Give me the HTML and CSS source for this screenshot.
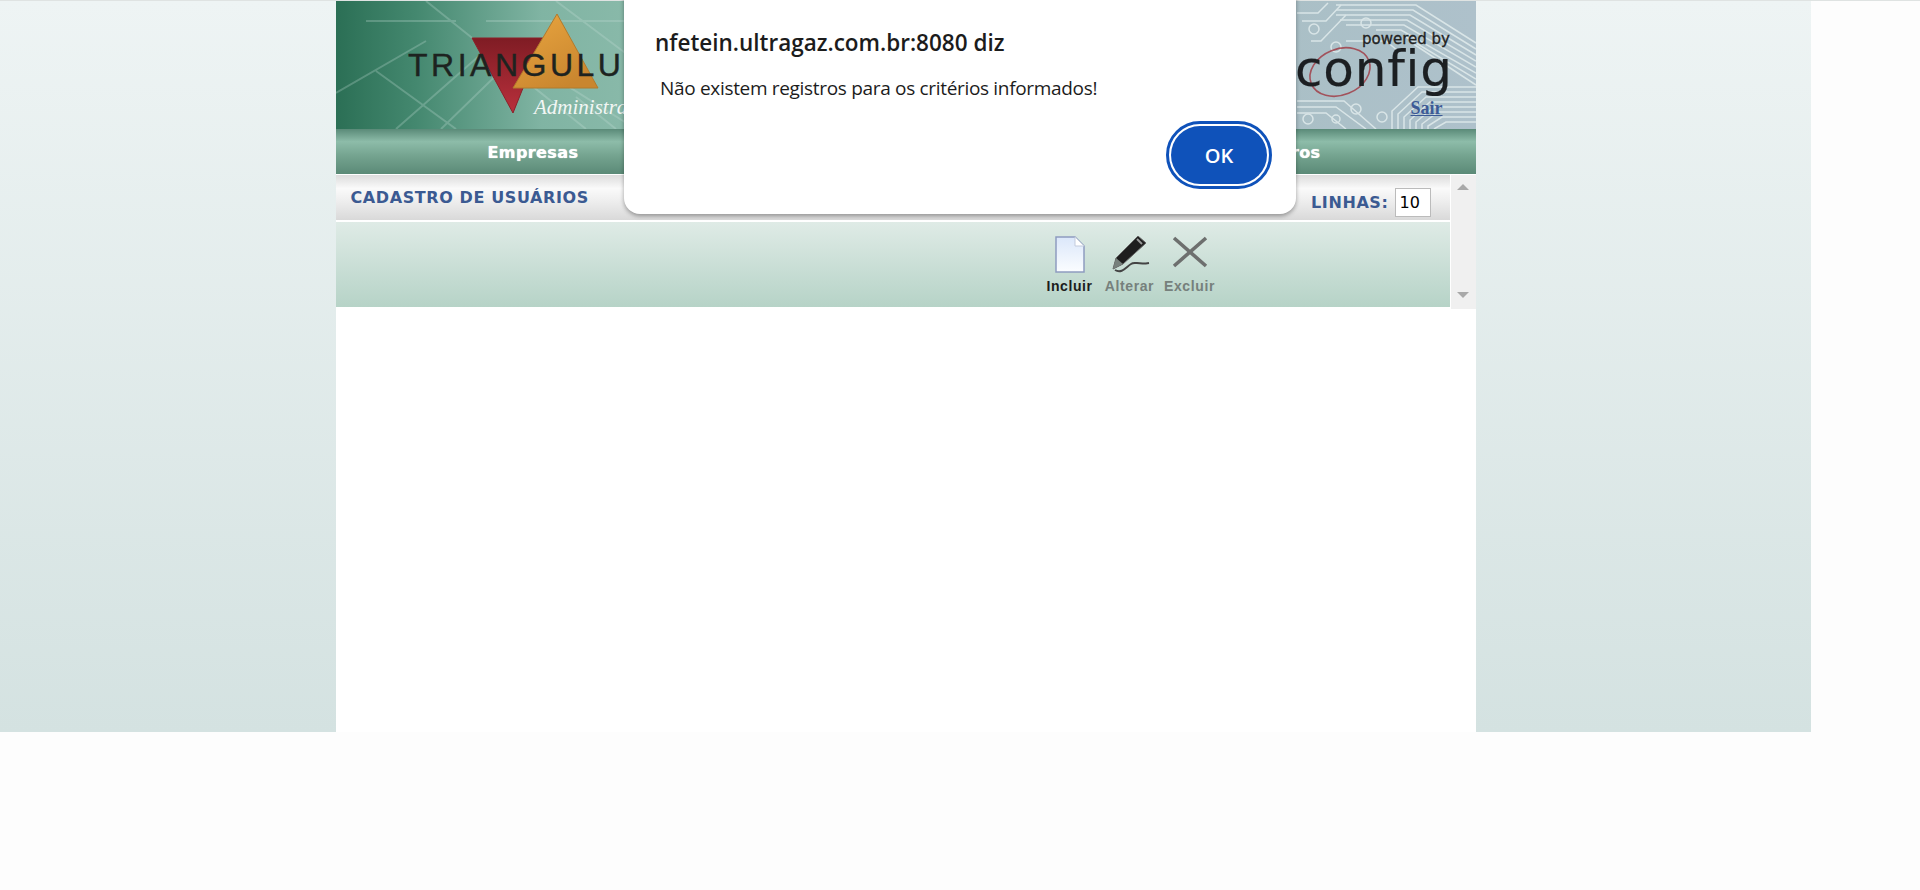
FILE: index.html
```html
<!doctype html>
<html lang="pt-BR">
  <head>
    <meta charset="utf-8">
    <title>Cadastro de Usuários</title>
    <link rel="stylesheet" href="styles.css">
  </head>
  <body>
    <div class="page">
      <div class="side"></div>
      <div class="center">
        <svg class="banner" width="1140" height="128" viewBox="0 0 1140 128">
          <defs>
            <linearGradient id="bannerGreen" x1="0" y1="0" x2="1" y2="0">
              <stop offset="0" stop-color="#2b6f55"/>
              <stop offset="0.07" stop-color="#44886f"/>
              <stop offset="0.18" stop-color="#80b4a3"/>
              <stop offset="0.5" stop-color="#a5cabd"/>
              <stop offset="0.8" stop-color="#a9bfc5"/>
              <stop offset="1" stop-color="#aec1cb"/>
            </linearGradient>
            <linearGradient id="orange" x1="0" y1="0" x2="0.6" y2="1">
              <stop offset="0" stop-color="#eaa640"/>
              <stop offset="1" stop-color="#c9862f"/>
            </linearGradient>
            <linearGradient id="red" x1="0" y1="0" x2="0" y2="1">
              <stop offset="0" stop-color="#7f1c24"/>
              <stop offset="1" stop-color="#b9303c"/>
            </linearGradient>
          </defs>
          <rect width="1140" height="128" fill="url(#bannerGreen)"/>
          <g stroke="#c4e0d6" stroke-width="2" opacity="0.28" fill="none">
            <path d="M60 128 160 40 300 128M90 0 250 128M150 20H330M40 70 120 128M105 128 175 60M30 20H120M0 92 90 40M220 0 300 60M280 128 240 96"/>
          </g>
          <g class="traces" stroke="#d9e5e7" stroke-width="1.5" fill="none">
            <path d="M1000 4H1080L1140 42M1000 9H1077L1140 48M1000 14H1074L1140 54M1004 19H1071L1140 60M1010 24H1068L1140 66M1040 29H1065L1140 72M1070 36 1140 78M1076 42 1140 84"/>
            <path d="M1056 128V110L1082 86H1140M1062 128V113L1086 91H1140M1068 128V116L1090 96H1140M1074 128V119L1094 101H1140M1080 128V121L1098 106H1140M1086 128V123L1102 111H1140M1092 128V125L1106 116H1140M1098 128 1110 121H1140"/>
            <path d="M961 112H990L1010 128M961 106H1000L1030 128M961 100H1008L1040 128M975 40H985L1010 14M966 20H990L1005 4M961 12H982L992 2M1010 40H1050L1062 50"/>
            <circle cx="978" cy="28" r="5"/>
            <circle cx="1000" cy="46" r="5"/>
            <circle cx="1030" cy="22" r="5"/>
            <circle cx="972" cy="118" r="5"/>
            <circle cx="1020" cy="108" r="5"/>
            <circle cx="1046" cy="116" r="5"/>
            <circle cx="1000" cy="118" r="4"/>
          </g>
          <path d="M136 37H207L177 112Z" fill="url(#red)" stroke="#8c2029"/>
          <path d="M221 13 262 87H177Z" fill="url(#orange)" stroke="#b27a2c"/>
          <text class="logo-name" x="72" y="75">TRIANGULUM</text>
          <text class="logo-sub" x="198" y="113">Administração</text>
          <text class="powered" x="1026" y="43">powered by</text>
          <ellipse cx="1004" cy="71" rx="31" ry="23" transform="rotate(-22 1004 71)" fill="none" stroke="#a03640" stroke-width="1.6" opacity="0.8"/>
          <text class="config" x="959" y="85">config</text>
        </svg>
        <a class="logout" href="#">Sair</a>
        <nav class="menu">
          <span>Empresas</span>
          <span>Outros</span>
        </nav>
        <div class="work">
          <div class="panel">
            <div class="title-bar">
              <h1>CADASTRO DE USUÁRIOS</h1>
              <label class="lines">LINHAS: <input class="lines-input" value="10"></label>
            </div>
            <div class="toolbar">
              <div class="tool tool-on">
                <svg width="32" height="38" viewBox="0 0 32 38">
                  <defs>
                    <linearGradient id="paper" x1="0" y1="0" x2="0" y2="1">
                      <stop offset="0" stop-color="#dbe7fa"/>
                      <stop offset="1" stop-color="#fbfdff"/>
                    </linearGradient>
                  </defs>
                  <path d="M2 1H21L30 10V36H2Z" fill="url(#paper)" stroke="#8e9cc0" stroke-width="1.5"/>
                  <path d="M21 1V10H30Z" fill="#fff" stroke="#c3cbdc"/>
                </svg>
                <span>Incluir</span>
              </div>
              <div class="tool">
                <svg width="42" height="38" viewBox="0 0 42 38">
                  <path d="M29 0 37 7 14 28 4 33 7 22Z" fill="#1e1e1e" stroke="#666"/>
                  <path d="M7 22 14 28 4 33Z" fill="#77807c"/>
                  <path d="M28 3 33 8" stroke="#999" stroke-width="2"/>
                  <path d="M6 34C13 38 17 31 22 28 26 25 28 29 40 27" fill="none" stroke="#444" stroke-width="2"/>
                </svg>
                <span>Alterar</span>
              </div>
              <div class="tool">
                <svg width="38" height="38" viewBox="0 0 38 38">
                  <path d="M3 2 35 30M35 2 3 30" stroke="#6d6f6e" stroke-width="3.6"/>
                </svg>
                <span>Excluir</span>
              </div>
            </div>
          </div>
          <div class="scrollbar">
            <span class="arrow-up"></span>
            <span class="arrow-down"></span>
          </div>
        </div>
      </div>
      <div class="side"></div>
    </div>

    <div class="dialog">
      <h2>nfetein.ultragaz.com.br:8080 diz</h2>
      <p>Não existem registros para os critérios informados!</p>
      <div class="dialog-actions">
        <button class="ok">OK</button>
      </div>
    </div>
  </body>
</html>
```

FILE: styles.css
```css
body {
    margin: 0;
    background: #fdfdfd;
    border-top: 1px solid #dfe3e2;
    font-family: "DejaVu Sans", sans-serif;
}

.page {
    display: flex;
    width: 1811px;
    height: 731px;
}

.side {
    flex: 1;
    background: linear-gradient(#eef4f4, #d4e2e1);
}

.center {
    position: relative;
    width: 1140px;
    background: #fff;
}

.banner {
    display: block;
}

.logo-name {
    font: 32px "Liberation Sans", sans-serif;
    letter-spacing: 3.5px;
    fill: #1d2320;
    stroke: #1d2320;
    stroke-width: 0.4px;
}

.logo-sub {
    font: italic 21px "Liberation Serif", serif;
    fill: #f2f6f4;
}

.powered {
    font: 15px "DejaVu Sans", sans-serif;
    fill: #222;
    stroke: #222;
    stroke-width: 0.3px;
}

.config {
    font: 50px "DejaVu Sans", sans-serif;
    letter-spacing: 0.8px;
    fill: #1c1f22;
    stroke: #1c1f22;
    stroke-width: 0.2px;
}

.logout {
    position: absolute;
    top: 97px;
    left: 1075px;
    font: bold 18px "Liberation Serif", serif;
    color: #3c5a96;
}

.menu {
    display: flex;
    justify-content: space-between;
    height: 45px;
    padding: 2px 155px 0 152px;
    box-sizing: border-box;
    align-items: center;
    background: linear-gradient(#5a8a78, #8dbca9 28%, #74a38f 60%, #5b8a77);
    font-weight: bold;
    font-size: 16px;
    letter-spacing: 0.4px;
    color: #fff;
    text-shadow: 0 0 1px #fff;
}

.work {
    display: flex;
    height: 134px;
    margin-top: 1px;
}

.panel {
    flex: 1;
}

.title-bar {
    display: flex;
    justify-content: space-between;
    align-items: center;
    height: 45px;
    box-sizing: border-box;
    padding: 0 19px 0 15px;
    background: linear-gradient(#dcdcdc, #fafafa 30%, #ededed 60%, #d9d9d9);
    color: #3b5a92;
    font-weight: bold;
    font-size: 16px;
    letter-spacing: 0.6px;
}

.title-bar h1 {
    margin: 0 0 1px;
    font-size: 16px;
}

.lines {
    display: flex;
    align-items: center;
    gap: 6px;
    padding-top: 9px;
}

.lines-input {
    width: 36px;
    height: 29px;
    box-sizing: border-box;
    padding: 2px 4px;
    border: 1px solid #bbb;
    background: #fff;
    font: 16px "DejaVu Sans", sans-serif;
    color: #000;
}

.toolbar {
    display: flex;
    justify-content: flex-end;
    height: 85px;
    margin-top: 2px;
    padding-right: 230px;
    background: linear-gradient(#dfebe6, #b6d3c7);
}

.tool {
    display: flex;
    flex-direction: column;
    align-items: center;
    width: 60px;
    padding-top: 14px;
    font: bold 14px "Liberation Sans", sans-serif;
    letter-spacing: 0.6px;
    color: #76807c;
}

.tool svg {
    display: block;
    margin-bottom: 4px;
}

.tool-on {
    color: #1c1c1c;
}

.scrollbar {
    display: flex;
    flex-direction: column;
    justify-content: space-between;
    align-items: center;
    box-sizing: border-box;
    width: 25px;
    margin-left: 1px;
    padding: 9px 0 11px;
    background: #f0f0f0;
}

.arrow-up,
.arrow-down {
    width: 0;
    height: 0;
    border-left: 6px solid transparent;
    border-right: 6px solid transparent;
}

.arrow-up {
    border-bottom: 6px solid #a9a9a9;
}

.arrow-down {
    border-top: 6px solid #a9a9a9;
}

.dialog {
    position: absolute;
    top: -20px;
    left: 624px;
    width: 672px;
    height: 234px;
    box-sizing: border-box;
    padding: 48px 24px 0 31px;
    background: #fff;
    border-radius: 16px;
    box-shadow: 0 2px 4px rgba(0, 0, 0, 0.35);
    font-family: "Open Sans", sans-serif;
    color: #1c1c1c;
}

.dialog h2 {
    margin: 0;
    font-size: 22.5px;
    font-weight: 600;
    line-height: 30px;
}

.dialog p {
    margin: 17px 0 0 5px;
    font-size: 19px;
    letter-spacing: -0.32px;
    line-height: 26px;
}

.dialog-actions {
    display: flex;
    justify-content: flex-end;
    margin-top: 25px;
}

.ok {
    width: 96px;
    height: 58px;
    margin-right: 5px;
    border: 0;
    border-radius: 30px;
    outline: 3px solid #0f52ba;
    outline-offset: 2px;
    background: #0f52ba;
    font: 600 20px "Open Sans", sans-serif;
    color: #fff;
}
```
